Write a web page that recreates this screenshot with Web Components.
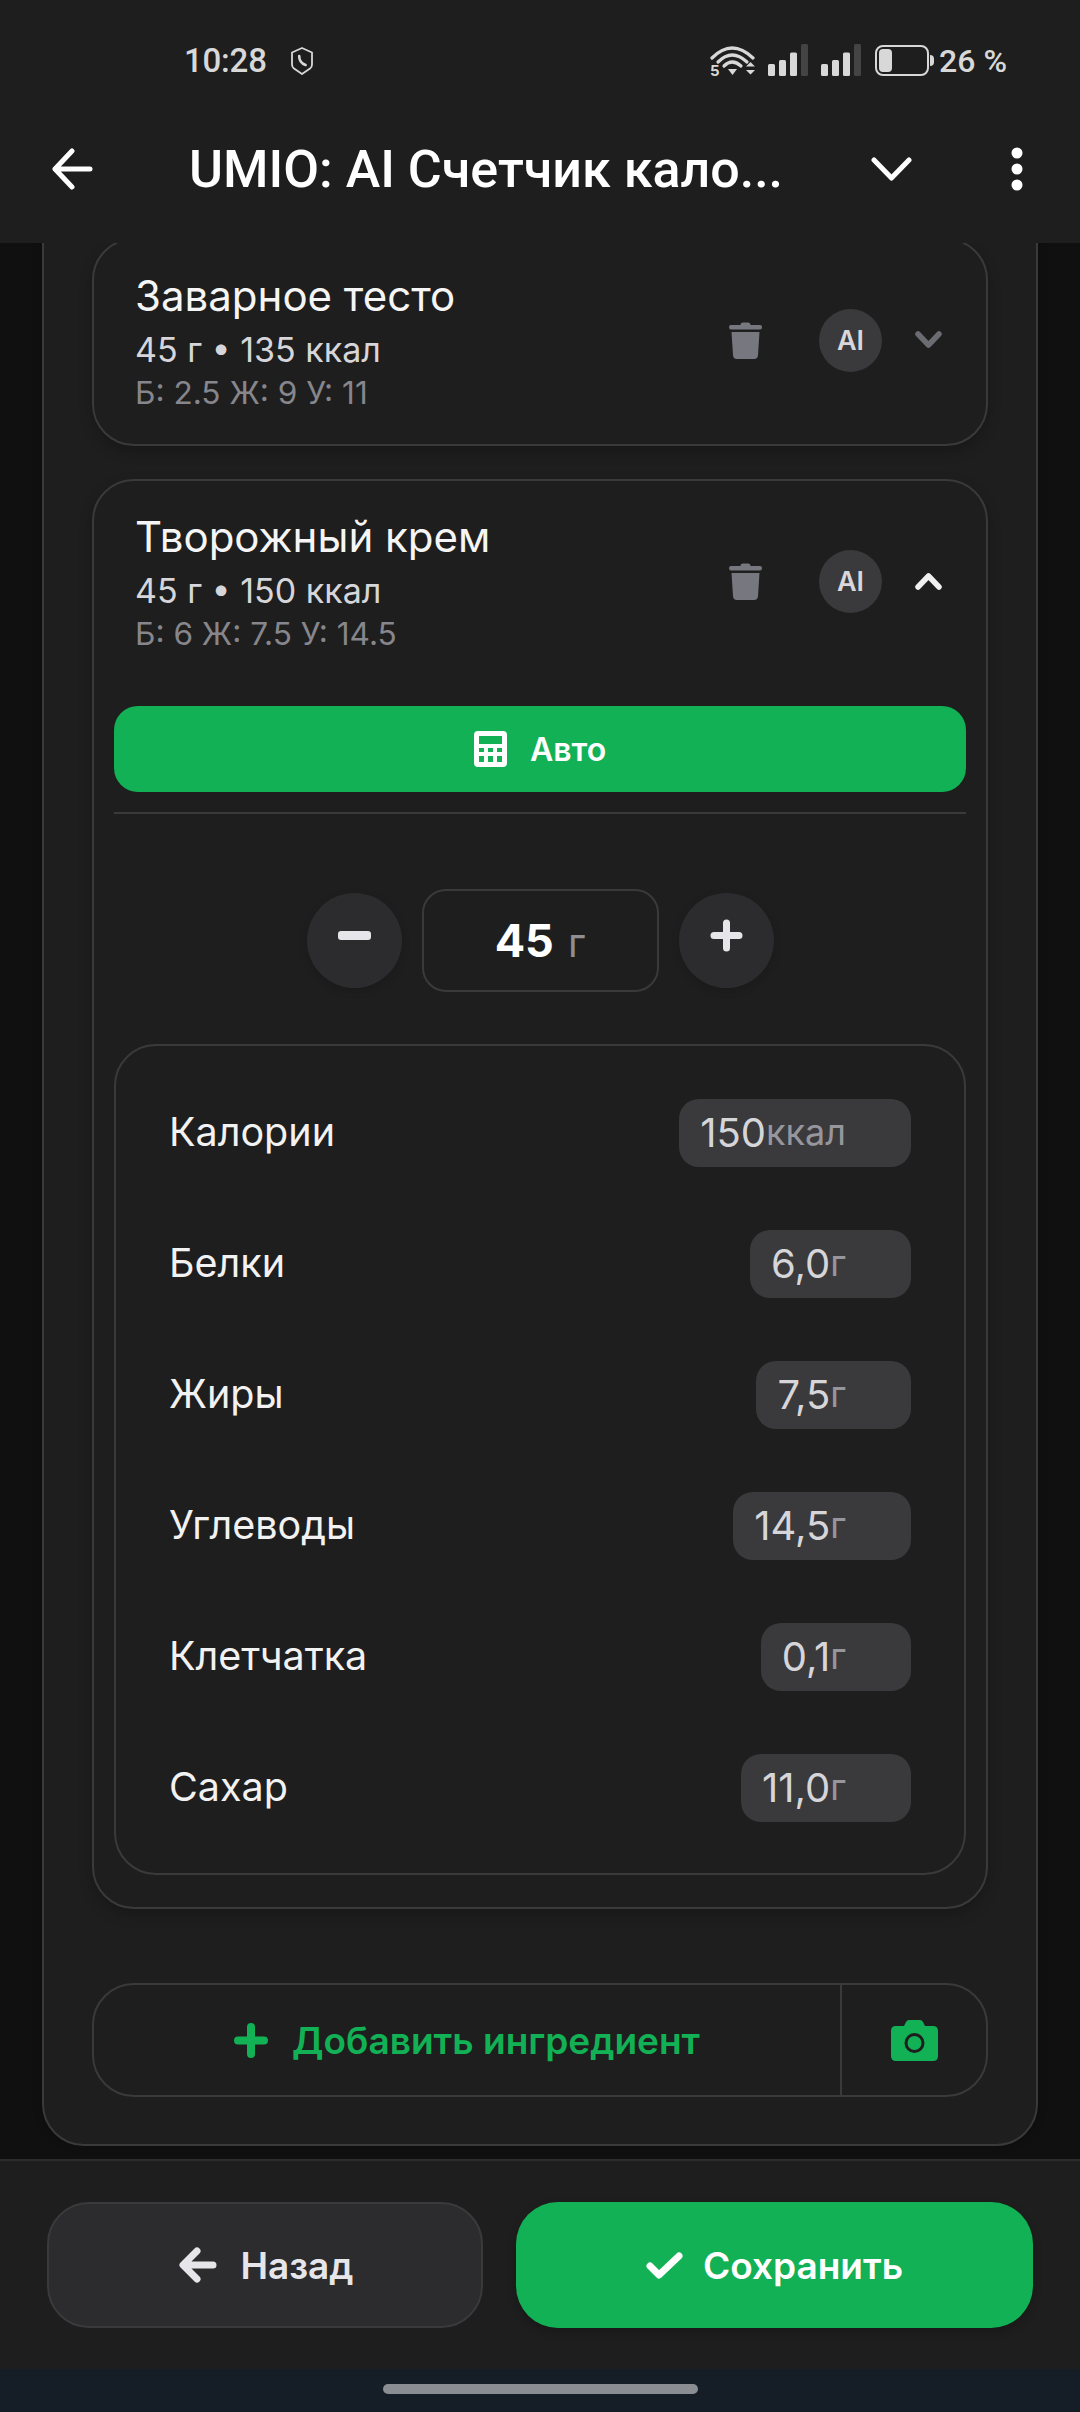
<!DOCTYPE html>
<html lang="ru">
<head>
<meta charset="utf-8">
<title>UMIO</title>
<style>
    html, body { margin: 0; padding: 0; background: #101010; }
    body { width: 1080px; height: 2412px; overflow: hidden; font-family: Inter, "Noto Sans", sans-serif; }
    app-page { height: 2412px; }
</style>
</head>
<body>
<app-page>
    <status-bar slot="top"></status-bar>
    <title-bar slot="top" text="UMIO: AI Счетчик кало..."></title-bar>

    <ingredient-card name="Заварное тесто" sub="45 г • 135 ккал" macros="Б: 2.5 Ж: 9 У: 11"></ingredient-card>
    <ingredient-card name="Творожный крем" sub="45 г • 150 ккал" macros="Б: 6 Ж: 7.5 У: 14.5" open>
        <auto-button>Авто</auto-button>
        <amount-stepper value="45" unit="г"></amount-stepper>
        <nutrition-box>
            <nutrition-row label="Калории" value="150" unit="ккал"></nutrition-row>
            <nutrition-row label="Белки" value="6,0" unit="г"></nutrition-row>
            <nutrition-row label="Жиры" value="7,5" unit="г"></nutrition-row>
            <nutrition-row label="Углеводы" value="14,5" unit="г"></nutrition-row>
            <nutrition-row label="Клетчатка" value="0,1" unit="г"></nutrition-row>
            <nutrition-row label="Сахар" value="11,0" unit="г"></nutrition-row>
        </nutrition-box>
    </ingredient-card>
    <add-row></add-row>

    <wizard-footer slot="bottom"></wizard-footer>
    <home-indicator slot="bottom"></home-indicator>
</app-page>

<script>
(function () {
    const define = (name, css, html, render) => {
        customElements.define(name, class extends HTMLElement {
            constructor() {
                super();
                this.attachShadow({ mode: "open" });
            }
            connectedCallback() {
                const markup = render ? render(this) : html;
                this.shadowRoot.innerHTML = `<style>${css}</style>${markup}`;
            }
        });
    };

    // Page frame: top bars, scrolled panel, bottom bars
    define("app-page", `
        :host { display: flex; flex-direction: column; width: 1080px; }
        .top { flex: none; background: #1e1e1e; position: relative; z-index: 2; }
        .scroller {
            flex: 1; min-height: 0; overflow: hidden;
            display: flex; flex-direction: column; justify-content: flex-end;
            padding: 0 42px 13px;
            background: #101010;
        }
        .panel {
            flex: none;
            display: flex; flex-direction: column; gap: 33px;
            padding: 60px 48px 47px;
            background: #1e1e1e;
            border: 2px solid #3a3a3c;
            border-radius: 42px;
            box-shadow: 0 0 10px rgba(0,0,0,.25);
        }
        ::slotted(add-row) { margin-top: 41px; }
        .bottom { flex: none; }
    `, `
        <div class="top"><slot name="top"></slot></div>
        <div class="scroller"><div class="panel"><slot></slot></div></div>
        <div class="bottom"><slot name="bottom"></slot></div>
    `);

    define("status-bar", `
        :host { display: flex; align-items: center; height: 105px; padding: 16px 73px 0 184px; box-sizing: border-box;
                font: 500 33px Roboto, sans-serif; color: #d8d8d8; }
        .time { width: 80px; white-space: nowrap; letter-spacing: -0.2px; }
        .shield { margin-left: 27px; }
        .right { margin-left: auto; display: flex; align-items: center; }
        svg { display: block; flex: none; }
        .wifi { margin-bottom: -7px; }
        .pct { margin-left: 5px; font-size: 32px; white-space: nowrap; }
    `, `
        <span class="time">10:28</span>
        <svg class="shield" width="22" height="28" viewBox="0 0 22 28" fill="none" stroke="#d8d8d8" stroke-width="1.8">
            <path d="M11 1 L21 5.5 V17.5 Q21 20 19 21.6 L11 27 L3 21.6 Q1 20 1 17.5 V5.5 Z" stroke-linejoin="round"/>
            <path d="M8.2 9 Q8 15.5 14.6 18" stroke-width="2.6" stroke-linecap="round"/>
        </svg>
        <div class="right">
            <svg class="wifi" width="46" height="40" viewBox="0 0 46 40" fill="none" stroke="#d8d8d8" stroke-linecap="round">
                <path d="M2 14 Q22 -6 43 14" stroke-width="3.2"/>
                <path d="M8 18 Q22 4 37 18" stroke-width="3.2"/>
                <path d="M14 22 Q22 14 31 22" stroke-width="3.2"/>
                <path d="M18 25 H27 L22.5 31 Z" fill="#d8d8d8" stroke="none"/>
                <path d="M36 22.5 L40.5 18 L45 22.5 Z M36 26 H45 L40.5 30.5 Z" fill="#d8d8d8" stroke="none"/>
                <text x="0" y="32" font-family="Inter, sans-serif" font-size="15" font-weight="700" fill="#d8d8d8" stroke="none">5</text>
            </svg>
            <svg style="margin-left:11px" width="41" height="33" viewBox="0 0 41 33">
                <rect x="1" y="20" width="7" height="12" rx="1.5" fill="#d8d8d8"/>
                <rect x="12" y="16" width="7" height="16" rx="1.5" fill="#d8d8d8"/>
                <rect x="23" y="8.500" width="7" height="23.500" rx="1.5" fill="#d8d8d8"/>
                <rect x="34" y="0" width="7" height="32" rx="1.5" fill="#444"/>
            </svg>
            <svg style="margin-left:12px" width="41" height="33" viewBox="0 0 41 33">
                <rect x="1" y="20" width="7" height="12" rx="1.5" fill="#d8d8d8"/>
                <rect x="12" y="16" width="7" height="16" rx="1.5" fill="#d8d8d8"/>
                <rect x="23" y="8.500" width="7" height="23.500" rx="1.500" fill="#d8d8d8"/>
                <rect x="34" y="0" width="7" height="32" rx="1.5" fill="#444"/>
            </svg>
            <svg style="margin-left:14px" width="59" height="31" viewBox="0 0 59 31">
                <rect x="1" y="1" width="52" height="29" rx="7" fill="none" stroke="#d8d8d8" stroke-width="2"/>
                <rect x="4" y="4" width="13" height="23" rx="4" fill="#d8d8d8"/>
                <path d="M55 10 Q59 10 59 14 V17 Q59 21 55 21 Z" fill="#d8d8d8"/>
            </svg>
            <span class="pct">26 %</span>
        </div>
    `);

    define("title-bar", `
        :host { display: flex; align-items: center; height: 128px; margin-bottom: 10px; padding-left: 52px; color: #fff; }
        svg { display: block; flex: none; }
        .title { flex: none; width: 682px; margin-left: 96px; font: 500 52px Roboto, sans-serif; white-space: nowrap; }
        .dots { margin-left: 99px; }
    `, "", (el) => `
        <svg width="41" height="42" viewBox="0 0 41 42" fill="none" stroke="#fff" stroke-width="5" stroke-linecap="round" stroke-linejoin="round">
            <path d="M20 3 L3 21 L20 39 M3 21 H38"/>
        </svg>
        <span class="title">${el.getAttribute("text")}</span>
        <svg width="41" height="24" viewBox="0 0 41 24" fill="none" stroke="#fff" stroke-width="5" stroke-linecap="round" stroke-linejoin="round">
            <path d="M3 3 L20.500 21 L38 3"/>
        </svg>
        <svg class="dots" width="12" height="44" viewBox="0 0 12 44" fill="#fff">
            <circle cx="6" cy="6" r="5.500"/><circle cx="6" cy="22" r="5.500"/><circle cx="6" cy="38" r="5.500"/>
        </svg>
    `);

    define("ingredient-card", `
        :host { display: block; border: 2px solid #3a3a3c; border-radius: 42px; background: #1e1e1e;
                box-shadow: 0 6px 14px rgba(0,0,0,.22); }
        .head { display: flex; align-items: center; padding: 30px 44px 31px 41px; }
        .text { flex: 1; min-width: 0; }
        .name { font-size: 42px; line-height: 52px; color: #f5f5f5; white-space: nowrap; }
        .sub { margin-top: 8px; font-size: 34px; line-height: 40px; color: #d6d6da; white-space: nowrap; }
        .macros { margin-top: 3px; font-size: 31.6px; line-height: 40px; color: #86868c; white-space: nowrap; }
        .actions { flex: none; display: flex; align-items: center; margin-bottom: 3px; }
        .ai { flex: none; width: 63px; height: 63px; margin-left: 57px; border-radius: 50%; background: #3a3a3c;
              display: flex; align-items: center; justify-content: center;
              font-size: 27px; font-weight: 600; color: #d8d8dc; }
        svg { display: block; flex: none; }
        .chev { margin-left: 33px; }
        .body { display: none; margin-top: 21px; padding: 0 20px 32px; }
        :host([open]) .body { display: block; }
    `, "", (el) => {
        const open = el.hasAttribute("open");
        const chevron = open
            ? `<path d="M3 15 L13.500 4 L24 15"/>`
            : `<path d="M3 3 L13.500 14 L24 3"/>`;
        return `
        <div class="head">
            <div class="text">
                <div class="name">${el.getAttribute("name")}</div>
                <div class="sub">${el.getAttribute("sub")}</div>
                <div class="macros">${el.getAttribute("macros")}</div>
            </div>
            <div class="actions">
                <svg width="33" height="37" viewBox="0 0 33 37" fill="#77777f">
                    <path d="M11.500 3 Q11.500 0.500 14 0.500 H19 Q21.500 0.500 21.500 3 H31 Q33 3 33 5 Q33 7.500 31 7.500 H2 Q0 7.500 0 5 Q0 3 2 3 Z"/>
                    <path d="M2.500 10 H30.500 L29 33 Q28.800 37 25 37 H8 Q4.200 37 4 33 Z"/>
                </svg>
                <div class="ai">AI</div>
                <svg class="chev" width="27" height="18" viewBox="0 0 27 18" fill="none" stroke="${open ? "#f0f0f0" : "#6b6b72"}" stroke-width="5.500" stroke-linecap="round" stroke-linejoin="round">
                    ${chevron}
                </svg>
            </div>
        </div>
        <div class="body"><slot></slot></div>`;
    });

    define("auto-button", `
        :host { display: flex; align-items: center; justify-content: center; gap: 23px; height: 86px;
                border-radius: 24px; background: #12b155; color: #fff;
                font-size: 32px; font-weight: 600; }
        svg { display: block; flex: none; }
    `, `
        <svg width="33" height="36" viewBox="0 0 33 36" fill="#fff" fill-rule="evenodd">
            <path d="M4 0 H29 Q33 0 33 4 V32 Q33 36 29 36 H4 Q0 36 0 32 V4 Q0 0 4 0 Z
                     M5 5 V13 H28 V5 Z
                     M5 17 V21 H10 V17 Z M14 17 V21 H19 V17 Z M23 17 V21 H28 V17 Z
                     M5 25 V31 H10 V25 Z M14 25 V31 H19 V25 Z M23 25 V31 H28 V25 Z"/>
        </svg>
        <slot></slot>
    `);

    define("amount-stepper", `
        :host { display: flex; align-items: center; justify-content: center; gap: 20px;
                margin-top: 20px; padding-top: 75px; border-top: 2px solid #3a3a3c; }
        .round { flex: none; width: 95px; height: 95px; border-radius: 50%; background: #2c2c2e;
                 display: flex; align-items: center; justify-content: center; padding-bottom: 10px; box-sizing: border-box;
                 box-shadow: 0 3px 8px rgba(0,0,0,.15); }
        .box { flex: none; width: 237px; height: 103px; box-sizing: border-box; border: 2px solid #3a3a3c; border-radius: 24px;
               display: flex; align-items: baseline; justify-content: center; gap: 14px; line-height: 99px; }
        .num { font-size: 45px; font-weight: 700; color: #fff; }
        .unit { font-size: 40px; color: #8e8e93; }
        svg { display: block; }
    `, "", (el) => `
        <div class="round">
            <svg width="33" height="9" viewBox="0 0 33 9"><rect width="33" height="9" rx="3" fill="#e5e5ea"/></svg>
        </div>
        <div class="box"><span class="num">${el.getAttribute("value")}</span><span class="unit">${el.getAttribute("unit")}</span></div>
        <div class="round">
            <svg width="33" height="33" viewBox="0 0 33 33" fill="none" stroke="#e5e5ea" stroke-width="7" stroke-linecap="round"><path d="M4 16.500 H29 M16.500 4 V29"/></svg>
        </div>
    `);

    define("nutrition-box", `
        :host { display: flex; flex-direction: column; gap: 63px; margin-top: 52px; padding: 53px 53px 51px;
                border: 2px solid #3a3a3c; border-radius: 42px; }
    `, `<slot></slot>`);

    define("nutrition-row", `
        :host { display: flex; align-items: center; justify-content: space-between; height: 68px; }
        .label { padding-bottom: 3px; font-size: 39.5px; color: #f2f2f2; white-space: nowrap; }
        .pill { height: 68px; padding: 0 65px 2px 21px; box-sizing: border-box; border-radius: 20px; background: #3a3a3c;
                display: flex; align-items: center; white-space: nowrap; }
        .val { font-size: 40px; color: #d6d6da; }
        .unit { font-size: 36px; color: #96969c; }
    `, "", (el) => `
        <span class="label">${el.getAttribute("label")}</span>
        <span class="pill"><span class="val">${el.getAttribute("value")}</span><span class="unit">${el.getAttribute("unit")}</span></span>
    `);

    define("add-row", `
        :host { display: flex; height: 114px; box-sizing: border-box; border: 2px solid #3a3a3c; border-radius: 42px; }
        .add { flex: 1; display: flex; align-items: center; justify-content: center; gap: 24px;
               font-size: 37px; font-weight: 600; color: #12b155; white-space: nowrap; }
        .photo { flex: none; width: 146px; box-sizing: border-box; border-left: 2px solid #3a3a3c;
                 display: flex; align-items: center; justify-content: center; }
        svg { display: block; flex: none; }
    `, `
        <div class="add">
            <svg width="34" height="35" viewBox="0 0 34 35" fill="none" stroke="#12b155" stroke-width="8" stroke-linecap="round"><path d="M4 17.500 H30 M17 4 V31"/></svg>
            <span>Добавить ингредиент</span>
        </div>
        <div class="photo">
            <svg width="47" height="41" viewBox="0 0 47 41">
                <path d="M5 6 H13 L15 2 Q16 0 18 0 H29 Q31 0 32 2 L34 6 H42 Q47 6 47 11 V36 Q47 41 42 41 H5 Q0 41 0 36 V11 Q0 6 5 6 Z" fill="#12b155"/>
                <circle cx="23.500" cy="23" r="8.500" fill="none" stroke="#1e1e1e" stroke-width="3"/>
            </svg>
        </div>
    `);

    define("wizard-footer", `
        :host { display: grid; grid-template-columns: 436px 517px; gap: 33px; height: 210px; box-sizing: border-box;
                padding: 41px 47px 0; background: #1e1e1e; border-top: 2px solid #2c2c2e; }
        .btn { height: 126px; box-sizing: border-box; border-radius: 42px;
               display: flex; align-items: center; justify-content: center; gap: 23px;
               font-size: 37px; font-weight: 600; white-space: nowrap; }
        .back { padding-left: 3px; background: #2c2c2e; border: 2px solid #3a3a3c; color: #e5e5ea; }
        .save { gap: 20px; background: #12b155; color: #fff; box-shadow: 0 4px 10px rgba(0,0,0,.2); }
        svg { display: block; flex: none; }
    `, `
        <div class="btn back">
            <svg width="38" height="36" viewBox="0 0 38 36" fill="none" stroke="#e5e5ea" stroke-width="7" stroke-linecap="round" stroke-linejoin="round"><path d="M18 4 L4 18 L18 32 M5 18 H34"/></svg>
            <span>Назад</span>
        </div>
        <div class="btn save">
            <svg width="37" height="27" viewBox="0 0 37 27" fill="none" stroke="#fff" stroke-width="7" stroke-linecap="round" stroke-linejoin="round"><path d="M4 14 L13 23 L33 4"/></svg>
            <span>Сохранить</span>
        </div>
    `);

    define("home-indicator", `
        :host { display: flex; justify-content: center; height: 43px; padding-top: 15px; box-sizing: border-box; background: #151d26; }
        .bar { width: 315px; height: 10px; border-radius: 5px; background: #8a8e92; }
    `, `<div class="bar"></div>`);
})();
</script>
</body>
</html>
